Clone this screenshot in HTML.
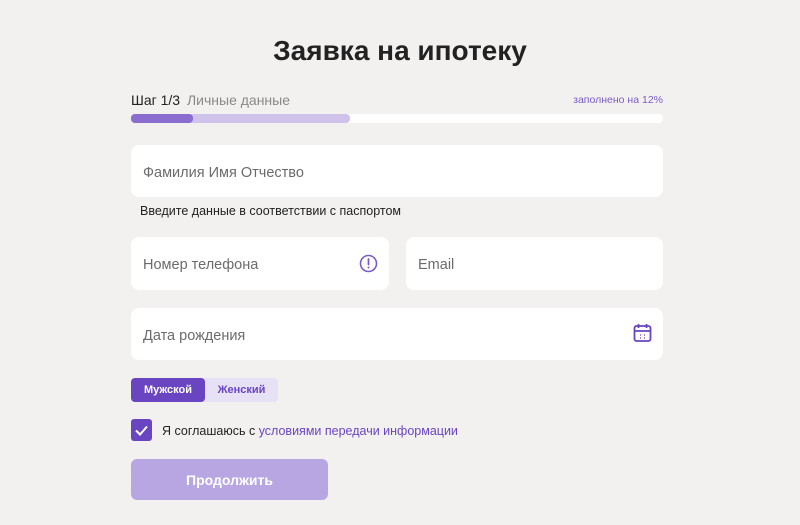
<!DOCTYPE html>
<html><head><meta charset="utf-8"><style>
*{box-sizing:border-box;margin:0;padding:0}
body{width:800px;height:525px;background:#f3f1ef;font-family:"Liberation Sans",sans-serif;position:relative;overflow:hidden;color:#222}
.a{position:absolute}
h1{position:absolute;top:35px;left:0;width:800px;text-align:center;font-size:28px;font-weight:bold;color:#222}
.f{position:absolute;background:#fff;border-radius:8px;font-size:14.5px;color:#6b6b6b;padding-left:12px;padding-top:3px;display:flex;align-items:center}
</style></head><body>
<h1>Заявка на ипотеку</h1>
<div class="a" style="left:131px;top:92px;font-size:14px;color:#222">Шаг 1/3 <span style="color:#888;margin-left:3px">Личные данные</span></div>
<div class="a" style="right:137px;top:94px;font-size:10.5px;color:#7a5bc9">заполнено на 12%</div>
<div class="a" style="left:131px;top:114px;width:532px;height:9px;background:#fff;border-radius:4px"></div>
<div class="a" style="left:131px;top:114px;width:219px;height:9px;background:#cfc3eb;border-radius:4px"></div>
<div class="a" style="left:131px;top:114px;width:62px;height:9px;background:#8a6dcf;border-radius:4px"></div>
<div class="f" style="left:131px;top:145px;width:532px;height:52px">Фамилия Имя Отчество</div>
<div class="a" style="left:140px;top:204px;font-size:12.5px;color:#222">Введите данные в соответствии с паспортом</div>
<div class="f" style="left:131px;top:237px;width:258px;height:53px">Номер телефона
<svg class="a" style="left:228px;top:17px" width="19" height="19" viewBox="0 0 19 19"><circle cx="9.5" cy="9.5" r="8" fill="none" stroke="#7a5bc9" stroke-width="1.6"/><path d="M9.5 5v5.5" stroke="#7a5bc9" stroke-width="1.8" stroke-linecap="round"/><circle cx="9.5" cy="13.5" r="1" fill="#7a5bc9"/></svg></div>
<div class="f" style="left:406px;top:237px;width:257px;height:53px">Email</div>
<div class="f" style="left:131px;top:308px;width:532px;height:52px">Дата рождения
<svg class="a" style="left:502px;top:15px" width="19" height="20" viewBox="0 0 19 20"><rect x="1.5" y="3" width="16" height="15" rx="2" fill="none" stroke="#6a45c2" stroke-width="1.8"/><path d="M1.5 8h16M5.5 1v4M13.5 1v4" stroke="#6a45c2" stroke-width="1.8"/><path d="M7 12h1M11 12h1M7 15h1M11 15h1" stroke="#6a45c2" stroke-width="1.3"/></svg></div>
<div class="a" style="left:131px;top:378px;width:147px;height:24px;background:#e7e1f5;border-radius:4px"></div>
<div class="a" style="left:131px;top:378px;width:74px;height:24px;background:#6a45c2;border-radius:4px;color:#fff;font-size:11px;font-weight:bold;text-align:center;line-height:25px">Мужской</div>
<div class="a" style="left:205px;top:378px;width:73px;height:24px;color:#6a45c2;font-size:11px;font-weight:bold;text-align:center;line-height:25px">Женский</div>
<div class="a" style="left:131px;top:419px;width:21px;height:22px;background:#6a45c2;border-radius:3px"><svg width="21" height="22"><path d="M5 11.5l4 4 7-8" fill="none" stroke="#fff" stroke-width="2"/></svg></div>
<div class="a" style="left:162px;top:424px;font-size:12.5px;color:#222">Я соглашаюсь с <span style="color:#6a45c2">условиями передачи информации</span></div>
<div class="a" style="left:131px;top:459px;width:197px;height:41px;background:#b8a6e3;border-radius:6px;color:#fff;font-weight:bold;font-size:14px;text-align:center;line-height:42px">Продолжить</div>
</body></html>
